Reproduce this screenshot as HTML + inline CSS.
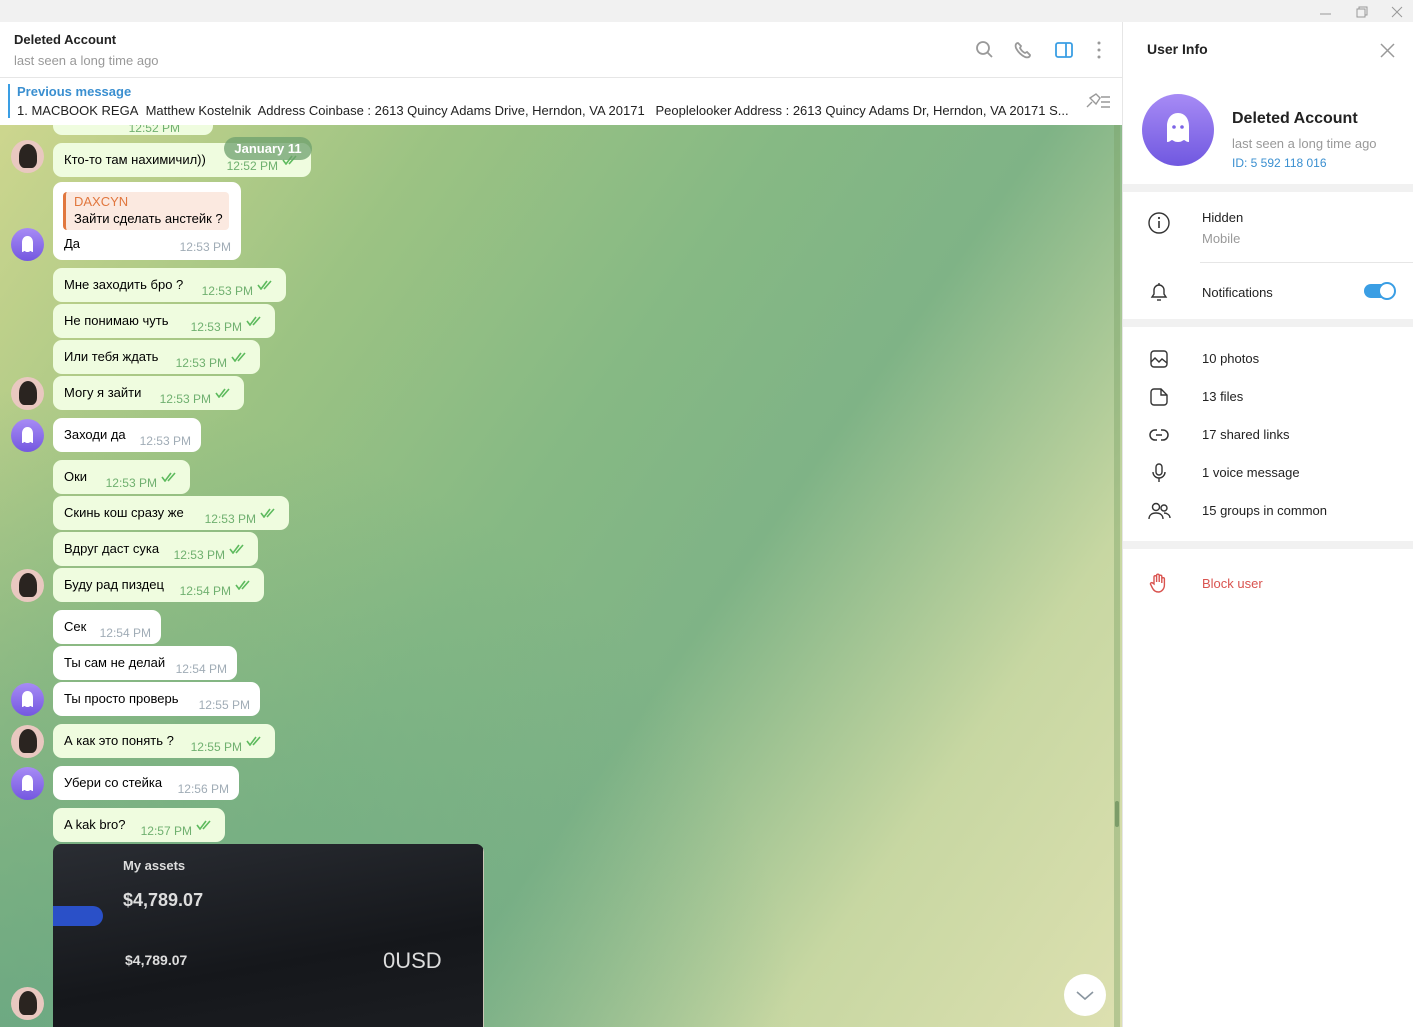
<!DOCTYPE html>
<html><head><meta charset="utf-8"><style>
*{margin:0;padding:0;box-sizing:border-box}
body{width:1413px;height:1027px;overflow:hidden;font-family:"Liberation Sans",sans-serif;position:relative;background:#fff;color:#000}
.a{position:absolute}
.tb{left:0;top:0;width:1413px;height:22px;background:#f1f1f1}
.chat{left:0;top:125px;width:1122px;height:902px;overflow:hidden;background:linear-gradient(125deg,#cdd68e 0%,#9cc383 25%,#86b984 45%,#7fb386 60%,#c7d7a2 80%,#dde0b0 100%)}
.chat:before{content:"";position:absolute;left:0;top:0;right:0;bottom:0;background:radial-gradient(ellipse at 0% 100%,rgba(95,160,130,.7),transparent 50%)}
.b{position:absolute;left:53px;height:34px;border-radius:9px;background:#effcdf;font-size:13px;padding:0 11px;line-height:34px;white-space:nowrap}
.b.w{background:#fff}
.b .t{position:absolute;right:33px;top:6px;font-size:12px;color:#6fb06f}
.b.w .t{right:10px;color:#a0acb6}
.b .k{position:absolute;right:11px;top:12px;width:18px;height:10px}
.av{position:absolute;left:11px;width:33px;height:33px;border-radius:50%}
.gh{background:linear-gradient(#a78bf5,#7458e0)}
.gh svg{position:absolute;left:8px;top:7px}
.man{background:#e9c8c0;overflow:hidden}
.man:after{content:"";position:absolute;left:8px;top:4px;width:18px;height:24px;background:#2a2420;border-radius:50% 50% 30% 30%}
.rp{left:1122px;top:22px;width:1px;height:1005px;background:#e6e6e6}
.ri{position:absolute;left:1202px;font-size:13px;color:#222}
.ic{position:absolute;left:1148px}
.sep{position:absolute;left:1123px;width:290px;height:8px;background:#f1f1f1}
</style></head><body>
<div class="a tb"></div>
<svg class="a" style="left:1318px;top:5px" width="90" height="14"><line x1="2" y1="9" x2="13" y2="9" stroke="#999"/><rect x="39" y="4" width="8" height="8" fill="none" stroke="#999"/><path d="M41 4V2h8v8h-2" fill="none" stroke="#999"/><path d="M74 2l10 10M84 2L74 12" stroke="#999"/></svg>

<div class="a" style="left:14px;top:32px;font-size:13px;font-weight:600;color:#222">Deleted Account</div>
<div class="a" style="left:14px;top:53px;font-size:13px;color:#999">last seen a long time ago</div>
<svg class="a" style="left:974px;top:40px" width="130" height="20" fill="none" stroke-width="1.8">
<circle cx="9" cy="8" r="6" stroke="#999"/><line x1="13.5" y1="12.5" x2="18" y2="17" stroke="#999"/>
<path d="M44 3c-2 0-3 2-2 5 2 4 5 7 9 9 3 1 5 0 5-2l-3-3-2 1c-2-1-4-3-5-5l1-2z" stroke="#999"/>
<rect x="82" y="3" width="16" height="14" rx="2" stroke="#3a9ee4"/><line x1="92" y1="3" x2="92" y2="17" stroke="#3a9ee4"/>
<circle cx="125" cy="3" r="1.5" fill="#999" stroke="none"/><circle cx="125" cy="10" r="1.5" fill="#999" stroke="none"/><circle cx="125" cy="17" r="1.5" fill="#999" stroke="none"/></svg>
<div class="a" style="left:0;top:77px;width:1122px;height:1px;background:#e6e6e6"></div>
<div class="a" style="left:8px;top:84px;width:2px;height:34px;background:#3a9ee4"></div>
<div class="a" style="left:17px;top:84px;font-size:13px;font-weight:bold;color:#3a8fd0">Previous message</div>
<div class="a" style="left:17px;top:103px;font-size:13px;color:#222;white-space:nowrap">1. MACBOOK REGA&nbsp; Matthew Kostelnik&nbsp; Address Coinbase : 2613 Quincy Adams Drive, Herndon, VA 20171&nbsp;&nbsp; Peoplelooker Address : 2613 Quincy Adams Dr, Herndon, VA 20171 S...</div>
<svg class="a" style="left:1084px;top:92px" width="28" height="18" fill="none" stroke="#999" stroke-width="1.4"><path d="M3 15l5-5M6 6l6-4 4 4-4 6z"/><path d="M17 5h9M17 10h9M17 15h9"/></svg>

<div class="a chat">
<div class="b" style="top:-24px;width:160px"><span class="t" style="top:10px">12:52 PM</span></div>
<div class="b" style="top:18px;width:258px">Кто-то там нахимичил))<span class="t">12:52 PM</span><svg class="k" viewBox="0 0 18 10"><path d="M1 5l3 4 6-8M7 9l7-8" stroke="#5dba5d" stroke-width="1.6" fill="none"/></svg></div>
<div class="a" style="left:224px;top:12px;width:88px;height:23px;border-radius:12px;background:rgba(110,160,110,.75);color:#fff;font-size:13px;font-weight:bold;line-height:23px;text-align:center">January 11</div>
<div class="av man" style="top:15px"></div>
<div class="b w" style="top:57px;width:188px;height:78px;line-height:normal">
<div style="position:absolute;left:10px;top:10px;width:166px;height:38px;background:#fbe9e0;border-left:3px solid #e1773e;border-radius:4px;padding:2px 0 0 8px"><div style="color:#e1773e;font-size:13px">DAXCYN</div><div style="font-size:13px;margin-top:2px">Зайти сделать анстейк ?</div></div>
<div style="position:absolute;left:11px;top:54px">Да</div><span class="t" style="top:58px">12:53 PM</span></div>
<div class="av gh" style="top:103px"><svg width="17" height="19"><path d="M8.5 1C5 1 3 4 3 7.5V17c1.5 0 2-1 2.5-1s1 1 3 1 2.5-1 3-1 1 1 2.5 1V7.5C14 4 12 1 8.5 1z" fill="#fff"/></svg></div>
<div class="b" style="top:143px;width:233px">Мне заходить бро ?<span class="t">12:53 PM</span><svg class="k" viewBox="0 0 18 10"><path d="M1 5l3 4 6-8M7 9l7-8" stroke="#5dba5d" stroke-width="1.6" fill="none"/></svg></div>
<div class="b" style="top:179px;width:222px">Не понимаю чуть<span class="t">12:53 PM</span><svg class="k" viewBox="0 0 18 10"><path d="M1 5l3 4 6-8M7 9l7-8" stroke="#5dba5d" stroke-width="1.6" fill="none"/></svg></div>
<div class="b" style="top:215px;width:207px">Или тебя ждать<span class="t">12:53 PM</span><svg class="k" viewBox="0 0 18 10"><path d="M1 5l3 4 6-8M7 9l7-8" stroke="#5dba5d" stroke-width="1.6" fill="none"/></svg></div>
<div class="b" style="top:251px;width:191px">Могу я зайти<span class="t">12:53 PM</span><svg class="k" viewBox="0 0 18 10"><path d="M1 5l3 4 6-8M7 9l7-8" stroke="#5dba5d" stroke-width="1.6" fill="none"/></svg></div>
<div class="av man" style="top:252px"></div>
<div class="b w" style="top:293px;width:148px">Заходи да<span class="t">12:53 PM</span></div>
<div class="av gh" style="top:294px"><svg width="17" height="19"><path d="M8.5 1C5 1 3 4 3 7.5V17c1.5 0 2-1 2.5-1s1 1 3 1 2.5-1 3-1 1 1 2.5 1V7.5C14 4 12 1 8.5 1z" fill="#fff"/></svg></div>
<div class="b" style="top:335px;width:137px">Оки<span class="t">12:53 PM</span><svg class="k" viewBox="0 0 18 10"><path d="M1 5l3 4 6-8M7 9l7-8" stroke="#5dba5d" stroke-width="1.6" fill="none"/></svg></div>
<div class="b" style="top:371px;width:236px">Скинь кош сразу же<span class="t">12:53 PM</span><svg class="k" viewBox="0 0 18 10"><path d="M1 5l3 4 6-8M7 9l7-8" stroke="#5dba5d" stroke-width="1.6" fill="none"/></svg></div>
<div class="b" style="top:407px;width:205px">Вдруг даст сука<span class="t">12:53 PM</span><svg class="k" viewBox="0 0 18 10"><path d="M1 5l3 4 6-8M7 9l7-8" stroke="#5dba5d" stroke-width="1.6" fill="none"/></svg></div>
<div class="b" style="top:443px;width:211px">Буду рад пиздец<span class="t">12:54 PM</span><svg class="k" viewBox="0 0 18 10"><path d="M1 5l3 4 6-8M7 9l7-8" stroke="#5dba5d" stroke-width="1.6" fill="none"/></svg></div>
<div class="av man" style="top:444px"></div>
<div class="b w" style="top:485px;width:108px">Сек<span class="t">12:54 PM</span></div>
<div class="b w" style="top:521px;width:184px">Ты сам не делай<span class="t">12:54 PM</span></div>
<div class="b w" style="top:557px;width:207px">Ты просто проверь<span class="t">12:55 PM</span></div>
<div class="av gh" style="top:558px"><svg width="17" height="19"><path d="M8.5 1C5 1 3 4 3 7.5V17c1.5 0 2-1 2.5-1s1 1 3 1 2.5-1 3-1 1 1 2.5 1V7.5C14 4 12 1 8.5 1z" fill="#fff"/></svg></div>
<div class="b" style="top:599px;width:222px">А как это понять ?<span class="t">12:55 PM</span><svg class="k" viewBox="0 0 18 10"><path d="M1 5l3 4 6-8M7 9l7-8" stroke="#5dba5d" stroke-width="1.6" fill="none"/></svg></div>
<div class="av man" style="top:600px"></div>
<div class="b w" style="top:641px;width:186px">Убери со стейка<span class="t">12:56 PM</span></div>
<div class="av gh" style="top:642px"><svg width="17" height="19"><path d="M8.5 1C5 1 3 4 3 7.5V17c1.5 0 2-1 2.5-1s1 1 3 1 2.5-1 3-1 1 1 2.5 1V7.5C14 4 12 1 8.5 1z" fill="#fff"/></svg></div>
<div class="b" style="top:683px;width:172px">A kak bro?<span class="t">12:57 PM</span><svg class="k" viewBox="0 0 18 10"><path d="M1 5l3 4 6-8M7 9l7-8" stroke="#5dba5d" stroke-width="1.6" fill="none"/></svg></div>
<div class="a" style="left:53px;top:719px;width:431px;height:190px;background:linear-gradient(170deg,#2a2d33,#15171b 60%,#1c1e22);border-radius:8px 8px 0 0;overflow:hidden;color:#ddd">
<div class="a" style="left:70px;top:14px;font-size:13px;font-weight:bold">My assets</div>
<div class="a" style="left:70px;top:46px;font-size:18px;font-weight:bold">$4,789.07</div>
<div class="a" style="left:0;top:62px;width:50px;height:20px;background:#2a50c8;border-radius:0 10px 10px 0"></div>
<div class="a" style="left:72px;top:108px;font-size:14px;font-weight:bold">$4,789.07</div>
<div class="a" style="left:330px;top:104px;font-size:22px">0USD</div>
<div class="a" style="left:430px;top:0;width:1px;height:190px;background:#c9c6b4"></div>
</div>
<div class="av man" style="top:862px"></div>
<div class="a" style="left:1114px;top:0;width:6px;height:902px;background:rgba(120,160,100,.4)"></div>
<div class="a" style="left:1115px;top:676px;width:4px;height:26px;border-radius:2px;background:rgba(90,130,80,.6)"></div>
<div class="a" style="left:1064px;top:849px;width:42px;height:42px;border-radius:50%;background:#fff"><svg width="42" height="42"><path d="M13 18l8 7 8-7" stroke="#8a96a0" stroke-width="1.6" fill="none"/></svg></div>
</div>

<div class="a rp"></div>
<div class="a" style="left:1147px;top:41px;font-size:14px;font-weight:bold;color:#222">User Info</div>
<svg class="a" style="left:1380px;top:43px" width="15" height="15"><path d="M1 1l13 13M14 1L1 14" stroke="#999" stroke-width="1.5"/></svg>
<div class="a" style="left:1142px;top:94px;width:72px;height:72px;border-radius:50%;background:linear-gradient(#a78bf5,#7058e0)"></div>
<svg class="a" style="left:1160px;top:110px" width="36" height="40"><path d="M18 3c-7 0-11 6-11 13v16c3 0 4-2 5-2s2 2 6 2 5-2 6-2 2 2 5 2V16c0-7-4-13-11-13z" fill="#fff"/><circle cx="14" cy="17" r="1.8" fill="#7c64e6"/><circle cx="22" cy="17" r="1.8" fill="#7c64e6"/></svg>
<div class="a" style="left:1232px;top:110px;font-size:16px;font-weight:bold;color:#222">Deleted Account</div>
<div class="a" style="left:1232px;top:136px;font-size:13px;color:#999">last seen a long time ago</div>
<div class="a" style="left:1232px;top:156px;font-size:12px;color:#3a8fd0">ID: 5 592 118 016</div>
<div class="sep" style="top:184px"></div>
<svg class="ic" style="top:212px" width="22" height="22"><circle cx="11" cy="11" r="10" stroke="#333" stroke-width="1.4" fill="none"/><line x1="11" y1="9" x2="11" y2="16" stroke="#333" stroke-width="1.6"/><circle cx="11" cy="6" r="1.1" fill="#333"/></svg>
<div class="ri" style="top:210px">Hidden</div>
<div class="ri" style="top:231px;color:#999">Mobile</div>
<div class="a" style="left:1200px;top:262px;width:213px;height:1px;background:#e6e6e6"></div>
<svg class="ic" style="top:281px" width="22" height="22" fill="none" stroke="#333" stroke-width="1.4"><path d="M4 16h14l-2-3V9a5 5 0 00-10 0v4z"/><path d="M9 19h4"/><path d="M11 2v2"/></svg>
<div class="ri" style="top:285px">Notifications</div>
<div class="a" style="left:1364px;top:284px;width:30px;height:14px;border-radius:7px;background:#3a9ee4"></div>
<div class="a" style="left:1378px;top:282px;width:18px;height:18px;border-radius:50%;background:#fff;border:2px solid #3a9ee4"></div>
<div class="sep" style="top:319px"></div>
<svg class="ic" style="top:348px" width="22" height="22" fill="none" stroke="#333" stroke-width="1.4"><rect x="3" y="3" width="16" height="16" rx="3"/><path d="M3 14l4-4 4 4 3-3 5 4"/></svg>
<div class="ri" style="top:351px">10 photos</div>
<svg class="ic" style="top:386px" width="22" height="22" fill="none" stroke="#333" stroke-width="1.4"><path d="M6 3h7l6 6v7a3 3 0 01-3 3H6a3 3 0 01-3-3V6a3 3 0 013-3z"/><path d="M13 3v6h6"/></svg>
<div class="ri" style="top:389px">13 files</div>
<svg class="ic" style="top:424px" width="22" height="22" fill="none" stroke="#333" stroke-width="1.5"><path d="M9 6H7a5 5 0 000 10h2M13 6h2a5 5 0 010 10h-2M8 11h6"/></svg>
<div class="ri" style="top:427px">17 shared links</div>
<svg class="ic" style="top:462px" width="22" height="22" fill="none" stroke="#333" stroke-width="1.4"><rect x="8" y="2" width="6" height="11" rx="3"/><path d="M5 10a6 6 0 0012 0M11 16v4"/></svg>
<div class="ri" style="top:465px">1 voice message</div>
<svg class="ic" style="top:500px" width="24" height="22" fill="none" stroke="#333" stroke-width="1.4"><circle cx="8" cy="7" r="3.5"/><path d="M1 19c0-4 3-6 7-6s7 2 7 6"/><circle cx="16" cy="8" r="3"/><path d="M16 13c3 0 6 2 6 5"/></svg>
<div class="ri" style="top:503px">15 groups in common</div>
<div class="sep" style="top:541px"></div>
<svg class="ic" style="top:572px" width="22" height="22" fill="none" stroke="#d9534f" stroke-width="1.4"><path d="M6 12V5a1.3 1.3 0 012.6 0v5V3.5a1.3 1.3 0 012.6 0V10V4.5a1.3 1.3 0 012.6 0V11V7a1.3 1.3 0 012.6 0v6c0 4-3 7-6 7s-5-2-6-4l-2-4a1.3 1.3 0 012.2-1z"/></svg>
<div class="ri" style="top:576px;color:#d9534f">Block user</div>
</body></html>
